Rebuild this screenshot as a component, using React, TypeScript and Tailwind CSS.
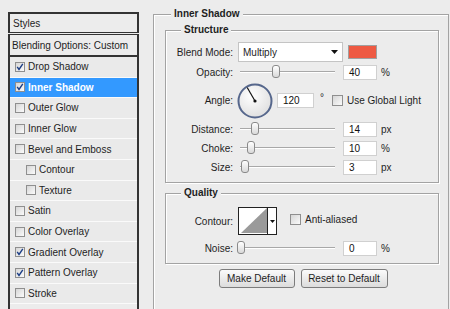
import React from 'react';

type Item = { label: string; on?: boolean; active?: boolean; indent?: boolean };

const items: Item[] = [
  { label: 'Drop Shadow', on: true },
  { label: 'Inner Shadow', on: true, active: true },
  { label: 'Outer Glow' },
  { label: 'Inner Glow' },
  { label: 'Bevel and Emboss' },
  { label: 'Contour', indent: true },
  { label: 'Texture', indent: true },
  { label: 'Satin' },
  { label: 'Color Overlay' },
  { label: 'Gradient Overlay', on: true },
  { label: 'Pattern Overlay', on: true },
  { label: 'Stroke' },
];

const Check = ({ on }: { on?: boolean }) => (
  <span className="w-[10px] h-[10px] shrink-0 border border-[#8f8f8f] bg-gradient-to-br from-[#d6d6d6] to-[#fbfbfb] flex items-center justify-center">
    {on && (
      <svg width="8" height="8" viewBox="0 0 8 8">
        <path d="M1.2 3.8 L3 6.4 L6.8 0.8" stroke="#1d3f86" strokeWidth="1.4" fill="none" />
      </svg>
    )}
  </span>
);

// slider track 238..338, thumb center given relative to that
const Slider = ({ thumb }: { thumb: number }) => (
  <div className="relative w-[100px] h-[16px]">
    <div className="absolute left-[2px] right-[3px] top-[7px] h-[1px] bg-[#a8a8a8] shadow-[0_1px_0_#ffffff]" />
    <div
      className="absolute top-[1px] w-[8px] h-[13px] rounded-[3px] border border-[#8a8a8a] bg-gradient-to-b from-[#ffffff] to-[#d9d9d9]"
      style={{ left: thumb - 4 }}
    />
  </div>
);

const Field = ({ value, w = 34 }: { value: string; w?: number }) => (
  <div
    className="h-[15px] bg-white border border-[#d0d0d0] pl-[5px] flex items-center text-[10px] text-[#111]"
    style={{ width: w }}
  >
    {value}
  </div>
);

const Label = ({ children }: { children: React.ReactNode }) => (
  <span className="w-[67px] text-right shrink-0">{children}</span>
);

const SliderRow = ({ label, thumb, value, unit }: { label: string; thumb: number; value: string; unit: string }) => (
  <div className="flex items-center h-[18px] mt-[1px]">
    <Label>{label}</Label>
    <div className="ml-[5px]">
      <Slider thumb={thumb} />
    </div>
    <div className="ml-[5px]">
      <Field value={value} />
    </div>
    <span className="ml-[4px]">{unit}</span>
  </div>
);

const Group = ({ title, className, children }: { title: string; className: string; children: React.ReactNode }) => (
  <div className={`relative border border-[#a3a3a3] shadow-[1px_1px_0_#ffffff,inset_1px_1px_0_#ffffff] ${className}`}>
    <span className="absolute -top-[7px] left-[15px] px-[3px] bg-[#ececec] font-bold leading-[12px]">{title}</span>
    {children}
  </div>
);

export default function App() {
  return (
    <div className="w-[450px] h-[309px] overflow-hidden bg-[#ececec] flex text-[10px] text-[#1e1e1e] font-['Liberation_Sans',Arial,sans-serif]">
      {/* Styles list */}
      <div className="ml-[8px] mt-[12px] w-[131px] shrink-0">
        <div className="h-[21px] border-x-2 border-t-2 border-b border-[#333] pl-[3px] flex items-center">Styles</div>
        <div className="mt-[1px] border-x-2 border-t border-[#333] h-[300px]">
          <div className="h-[22px] border-b-2 border-[#333] pl-[2px] flex items-center">Blending Options: Custom</div>
          {items.map((it) => (
            <div
              key={it.label}
              className={`h-[20.6px] border-b border-[#fafafa] flex items-center gap-[3px] ${it.indent ? 'pl-[16px]' : 'pl-[5px]'} ${
                it.active ? 'bg-[#3399ff] text-white font-bold' : 'bg-[#eaeaea]'
              }`}
            >
              <Check on={it.on} />
              <span>{it.label}</span>
            </div>
          ))}
        </div>
      </div>

      {/* Inner Shadow panel */}
      <div className="ml-[14px] mt-[14px] w-[296px] shrink-0">
        <div className="relative h-[310px] border-x border-t border-[#a3a3a3] shadow-[inset_1px_1px_0_#ffffff] pl-[11px] pr-[9px] pt-[15px]">
          <span className="absolute -top-[7px] left-[17px] px-[3px] bg-[#ececec] font-bold leading-[12px]">Inner Shadow</span>

          <Group title="Structure" className="h-[153px] pt-[11px]">
            <div className="flex items-center h-[20px]">
              <Label>Blend Mode:</Label>
              <div className="ml-[5px] w-[105px] h-[20px] bg-white border border-[#c4c4c4] flex items-center justify-between pl-[4px] pr-[4px]">
                <span>Multiply</span>
                <svg width="7" height="4" viewBox="0 0 7 4">
                  <path d="M0 0 H7 L3.5 4 Z" fill="#111" />
                </svg>
              </div>
              <div className="ml-[5px] w-[29px] h-[14px] bg-[#ee5a43] border border-[#a0a0a0]" />
            </div>

            <SliderRow label="Opacity:" thumb={38} value="40" unit="%" />

            <div className="flex items-center h-[37px] mt-[1px]">
              <Label>Angle:</Label>
              <svg className="ml-[4px]" width="36" height="36" viewBox="0 0 36 36">
                <defs>
                  <radialGradient id="dial" cx="0.4" cy="0.35" r="0.7">
                    <stop offset="0" stopColor="#ffffff" />
                    <stop offset="1" stopColor="#dedede" />
                  </radialGradient>
                </defs>
                <circle cx="18" cy="18" r="16.5" fill="url(#dial)" stroke="#56678c" strokeWidth="2" />
                <line x1="18" y1="18" x2="10.2" y2="4.5" stroke="#111" strokeWidth="1.2" />
                <circle cx="18" cy="18" r="1.6" fill="#111" />
              </svg>
              <div className="ml-[4px]">
                <Field value="120" w={37} />
              </div>
              <span className="ml-[6px] -mt-[6px]">°</span>
              <div className="ml-[8px] flex items-center gap-[4px]">
                <span className="w-[11px] h-[11px] border border-[#8f8f8f] bg-gradient-to-br from-[#d6d6d6] to-[#fbfbfb]" />
                <span>Use Global Light</span>
              </div>
            </div>

            <SliderRow label="Distance:" thumb={17} value="14" unit="px" />
            <SliderRow label="Choke:" thumb={13} value="10" unit="%" />
            <SliderRow label="Size:" thumb={7} value="3" unit="px" />
          </Group>

          <Group title="Quality" className="mt-[10px] h-[71px] pt-[13px]">
            <div className="flex items-center h-[28px]">
              <Label>Contour:</Label>
              <div className="ml-[5px] w-[39px] h-[28px] border-[1.5px] border-[#222] bg-white flex">
                <svg width="28" height="25" viewBox="0 0 28 25" className="shrink-0">
                  <polygon points="2,25 28,0 28,25" fill="#9a9a9a" />
                </svg>
                <div className="flex-1 border-l border-[#222] flex items-center justify-center">
                  <svg width="5" height="3" viewBox="0 0 5 3">
                    <path d="M0 0 H5 L2.5 3 Z" fill="#111" />
                  </svg>
                </div>
              </div>
              <div className="ml-[13px] flex items-center gap-[4px] -mt-[3px]">
                <span className="w-[11px] h-[11px] border border-[#8f8f8f] bg-gradient-to-br from-[#d6d6d6] to-[#fbfbfb]" />
                <span>Anti-aliased</span>
              </div>
            </div>
            <div className="mt-[4px]">
              <SliderRow label="Noise:" thumb={3} value="0" unit="%" />
            </div>
          </Group>

          <div className="mt-[5px] flex justify-center gap-[6px] pl-[2px]">
            <button className="w-[76px] h-[19px] rounded-[3px] border border-[#7c7c7c] bg-gradient-to-b from-[#fbfbfb] to-[#dcdcdc] text-[10px] text-[#1e1e1e]">
              Make Default
            </button>
            <button className="w-[87px] h-[19px] rounded-[3px] border border-[#7c7c7c] bg-gradient-to-b from-[#fbfbfb] to-[#dcdcdc] text-[10px] text-[#1e1e1e]">
              Reset to Default
            </button>
          </div>
        </div>
      </div>
    </div>
  );
}
